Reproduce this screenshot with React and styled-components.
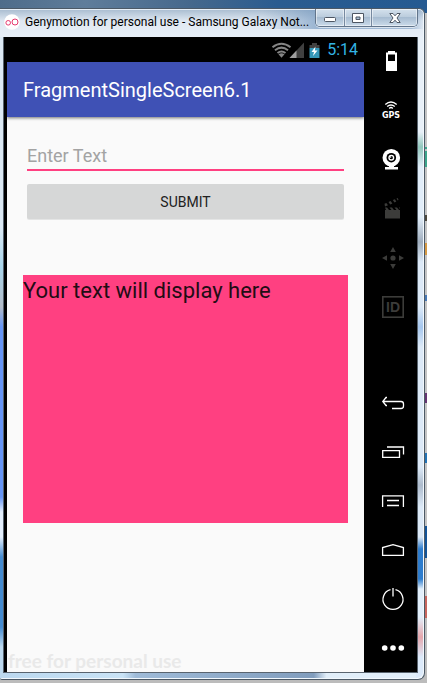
import React from "react";
import styled, { createGlobalStyle } from "styled-components";

const GlobalStyle = createGlobalStyle`
  * { box-sizing: border-box; }
  body { margin: 0; font-family: Roboto, "Liberation Sans", sans-serif; }
  button { font: inherit; border: 0; padding: 0; margin: 0; background: none; cursor: pointer; }
`;

const Desktop = styled.div`
  min-height: 100vh;
  display: flex;
  padding: 8px 2px 3px 0;
  background:
    linear-gradient(90deg, #4e6c8a, #5f7d9b 20%, #45688c 45%, #2a5c90 65%, #255a91) top / 100% 13px no-repeat,
    linear-gradient(#c4c4c4 0 134px, #3da58c 134px 136px, #c4c4c4 136px 138px, #3da58c 138px 154px,
      #c4c4c4 154px 202px, #4c473d 202px 208px, #c4c4c4 208px 230px, #d59a45 230px 242px,
      #c4c4c4 242px 282px, #4778b5 282px 288px, #c4c4c4 288px 380px, #653572 380px 390px,
      #c4c4c4 390px 440px, #2373b5 440px 450px, #c4c4c4 450px 513px, #135397 513px 545px,
      #c4c4c4 545px 583px, #c7675f 583px 605px, #bcbcbc 605px) 0 13px / 100% 100% no-repeat;
`;

const Window = styled.main`
  flex: 1;
  min-width: 0;
  display: flex;
  flex-direction: column;
  padding: 0 6px 6px 3px;
  border: solid #4c5966;
  border-width: 1px 1px 1px 0;
  border-radius: 0 6px 7px 2px;
  box-shadow: inset 0 1px #e6eff8, inset -1px -1px #f2f8fd;
  background:
    linear-gradient(#e8f0f8 0 95px, #92c8bd 110px, #e1edf9 130px 180px, #a0aebe 205px,
      #dce9f7 225px 270px, #a6c7ee 290px, #dce9f7 310px 430px, #aebccd 448px, #dce9f7 470px 500px,
      #2e7dce 512px 542px, #e2effb 552px 580px, #e5a7ad 600px, #dceafa 620px) right 28px / 8px 100% no-repeat,
    linear-gradient(#dce9f4 0 190px, #a9d5eb 230px, #b3bcc8 270px, #6695f5 290px 460px,
      #e4effc 475px 500px, #458bd0 520px 590px, #bdd9ee 610px) 0 28px / 4px 100% no-repeat,
    linear-gradient(90deg, #bbd8ef, #c9e3f6 29%, #9fbbd8 32%, #819dbd 74%, #e1eef9 77%) bottom / 100% 6px no-repeat,
    linear-gradient(90deg, transparent 62%, #7498bfaa 75%, #6d93bd88 97%, transparent) top / 100% 20px no-repeat,
    linear-gradient(#a7bbcf, #dfe8f2 12px, #e8eff7 28px) #dfeaf5;
`;

const TitleBar = styled.header`
  height: 28px;
  display: flex;
  align-items: flex-start;
`;

const AppMark = styled.svg`
  flex: none;
  width: 16px;
  height: 16px;
  margin: 5px 5px 0 1px;
`;

const WindowTitle = styled.h1`
  flex: 1;
  min-width: 0;
  margin: 0;
  font: 400 12px/26px Roboto, sans-serif;
  color: #000;
  white-space: nowrap;
`;

const WindowControls = styled.div`
  display: flex;
  flex: none;
  height: 18px;
  border: 1px solid #62758b;
  border-top: 0;
  border-radius: 0 0 5px 5px;
  overflow: hidden;
  box-shadow: 0 1px #ffffff99;
`;

const ControlButton = styled.button`
  width: ${(p) => p.$width}px;
  display: grid;
  place-items: center;
  background: linear-gradient(#d4e1ed, #bccddd 45%, #a7bcd1 50%, #cbdbea);
  box-shadow: inset 0 0 0 1px #ffffff80;
  & + & { border-left: 1px solid #7689a0; }
`;

const Emulator = styled.div`
  flex: 1;
  display: flex;
  min-width: 0;
  background: #000;
  border: solid #59646f;
  border-width: 0 1px 1px 1px;
  padding-left: 3px;
`;

const Screen = styled.section`
  flex: 1;
  min-width: 0;
  display: flex;
  flex-direction: column;
  background: #fafafa;
`;

const StatusBar = styled.div`
  height: 25px;
  display: flex;
  align-items: center;
  justify-content: flex-end;
  padding-right: 6px;
  background: #000;
  color: #33b5e5;
  font-size: 16px;
  line-height: 25px;
`;

const StatusIcons = styled.svg`
  width: 50px;
  height: 18px;
  margin-right: 6px;
`;

const AppBar = styled.header`
  height: 55px;
  padding: 0 16px;
  background: #3f51b5;
  color: #fff;
  box-shadow: 0 1px 3px #0000008c;
`;

const AppTitle = styled.h2`
  margin: 0;
  font-size: 20px;
  font-weight: 400;
  line-height: 56px;
`;

const Content = styled.div`
  flex: 1;
  display: flex;
  flex-direction: column;
  padding: 24px 16px 0;
`;

const Form = styled.form`
  display: flex;
  flex-direction: column;
  gap: 13px;
  padding: 0 4px;
`;

const TextInput = styled.input`
  width: 100%;
  height: 30px;
  padding: 0;
  border: 0;
  border-bottom: 2px solid #ff4081;
  border-radius: 0;
  outline: 0;
  background: transparent;
  color: #212121;
  font: 18px/28px Roboto, sans-serif;
  &::placeholder { color: #a3a3a3; opacity: 1; }
`;

const SubmitButton = styled.button`
  height: 35px;
  border-radius: 2px;
  background: #d6d7d7;
  box-shadow: 0 1px #e4e5e5;
  color: #212121;
  font-size: 14px;
  line-height: 36px;
`;

const Output = styled.output`
  display: block;
  height: 248px;
  margin-top: 56px;
  background: #ff4081;
  color: #220c14;
  font-size: 22px;
  line-height: 32px;
`;

const Watermark = styled.p`
  margin: auto 0 0;
  padding-left: 1px;
  color: #e9e9e9;
  font: 700 19px/22px Lato, sans-serif;
`;

const Sidebar = styled.nav`
  flex: none;
  width: 53px;
  padding-left: 5px;
  display: flex;
  flex-direction: column;
  justify-content: space-between;
`;

const ToolGroup = styled.div`
  display: flex;
  flex-direction: column;
`;

const ToolButton = styled.button`
  height: 49px;
  display: grid;
  place-items: center;
  color: ${(p) => (p.$dim ? "#3c3c3a" : "#fff")};
`;

const ToolIcon = styled.svg`
  width: 22px;
  height: 23px;
  overflow: visible;
`;

const line = { fill: "none", stroke: "currentColor", strokeWidth: 1.3 };

const sensors = [
  {
    label: "Battery",
    art: <path fill="currentColor" fillRule="evenodd" d="M6 1H13V2.5H15V21H4V2.5H6ZM6 4.5V11H13V4.5Z" />,
  },
  {
    label: "GPS",
    art: (
      <>
        <g fill="none" stroke="currentColor" strokeWidth="1.4">
          <path d="M3.3 5.6Q9 .4 14.7 5.6M5.2 7.6Q9 4.2 12.8 7.6" />
          <path d="M7.2 9.4Q9 7.8 10.8 9.4" />
        </g>
        <text x="9" y="19" textAnchor="middle" fill="currentColor" fontFamily="DejaVu Sans" fontWeight="700" fontSize="8">GPS</text>
      </>
    ),
  },
  {
    label: "Camera",
    art: (
      <>
        <circle cx="9.3" cy="9.7" r="8.8" fill="currentColor" />
        <circle cx="9.3" cy="9.7" r="4.8" fill="#000" />
        <circle cx="9.3" cy="9.7" r="3" fill="currentColor" />
        <circle cx="9.3" cy="9.7" r="1.6" fill="#000" />
        <circle cx="8.6" cy="9" r=".8" fill="currentColor" />
        <path fill="currentColor" d="M7 17H12V19H16V21.5H3V19H7Z" />
      </>
    ),
  },
  {
    label: "Record screen",
    dim: true,
    art: (
      <g fill="currentColor">
        <path d="M3 13H18V21.5H3Z" />
        <path d="M3 10.5H5L7 13H4ZM7.5 10.5H10L12 13H9.5ZM12.5 10.5H15L17 13H14.5ZM17 10.5H18V12Z" />
        <path d="M2.5 6.7L4.3 6L6 8.3L3 9.5ZM6.5 5L8.6 4L10.4 6.4L8.2 7.4ZM10.8 3.1L12.9 2.2L14.3 4.6L12.5 5.5ZM14.5 1.5L15.7 1L16.5 2.8L15.8 3.5Z" />
      </g>
    ),
  },
  {
    label: "Motion",
    dim: true,
    art: (
      <g fill="currentColor">
        <circle cx="11" cy="12" r="2.6" />
        <path d="M11 1L13.8 6H8.2ZM11 23L8.2 18H13.8ZM0 12L5 9.2V14.8ZM22 12L17 14.8V9.2Z" />
      </g>
    ),
  },
  {
    label: "Identifiers",
    dim: true,
    art: (
      <>
        <rect x=".8" y="1.8" width="20.4" height="20.4" fill="none" stroke="currentColor" strokeWidth="1.6" />
        <text x="11" y="17" textAnchor="middle" fill="currentColor" fontFamily="Liberation Sans" fontWeight="700" fontSize="14">ID</text>
      </>
    ),
  },
];

const navigation = [
  { label: "Back", art: <path {...line} d="M5 6.5H4L.8 10.5L4 14.5H5M1 10.5H19Q21.5 10.5 21.5 13V15Q21.5 17.5 19 17.5H10" /> },
  { label: "Recent apps", art: <path {...line} d="M5 7H21.5V14.5M.7 10.7H17.5V17.3H.7Z" /> },
  { label: "Menu", art: <path {...line} d="M.6 18V6.8H21.4V18M5 11.5H17M5 16.5H17" /> },
  { label: "Home", art: <path {...line} d="M.6 17.4V9.5L11 6.6L21.4 9.5V17.4Z" /> },
  { label: "Power", art: <path {...line} d="M8.5 2.7A10 10 0 1 0 13.5 2.7M11 1V9.5" /> },
  {
    label: "More",
    art: (
      <g fill="currentColor">
        <circle cx="2.7" cy="12" r="2.8" />
        <circle cx="11" cy="12" r="2.8" />
        <circle cx="19.3" cy="12" r="2.8" />
      </g>
    ),
  },
];

function Tools({ items }) {
  return (
    <ToolGroup>
      {items.map(({ label, dim, art }) => (
        <ToolButton key={label} type="button" aria-label={label} $dim={dim}>
          <ToolIcon viewBox="0 0 22 23" aria-hidden="true">{art}</ToolIcon>
        </ToolButton>
      ))}
    </ToolGroup>
  );
}

export default function App() {
  const [draft, setDraft] = React.useState("");
  const [shown, setShown] = React.useState("Your text will display here");
  const submit = (event) => {
    event.preventDefault();
    setShown(draft);
  };
  return (
    <>
      <GlobalStyle />
      <Desktop>
        <Window>
          <TitleBar>
            <AppMark viewBox="0 0 16 16" aria-hidden="true">
              <circle cx="8" cy="8" r="7.8" fill="#fff" />
              <g fill="none" stroke="#e6396f" strokeWidth="1">
                <circle cx="4.2" cy="8.8" r="2.3" />
                <circle cx="11" cy="8" r="3" />
              </g>
            </AppMark>
            <WindowTitle>Genymotion for personal use - Samsung Galaxy Not...</WindowTitle>
            <WindowControls>
              <ControlButton type="button" aria-label="Minimize" $width={28}>
                <svg width="14" height="12" aria-hidden="true"><rect x="1.5" y="5.5" width="11" height="4" rx="1" fill="#fff" stroke="#4d5663" /></svg>
              </ControlButton>
              <ControlButton type="button" aria-label="Maximize" $width={27}>
                <svg width="12" height="12" aria-hidden="true"><path d="M.5 1.5H11.5V10.5H.5ZM4 5V7.5H8V5Z" fill="#fff" fillRule="evenodd" stroke="#4d5663" /></svg>
              </ControlButton>
              <ControlButton type="button" aria-label="Close" $width={46}>
                <svg width="12" height="12" aria-hidden="true"><path d="M.8 1.5H4L6 3.8L8 1.5H11.2L8 6L11.2 10.5H8L6 8.2L4 10.5H.8L4 6Z" fill="#fff" stroke="#4d5663" /></svg>
              </ControlButton>
            </WindowControls>
          </TitleBar>
          <Emulator>
            <Screen>
              <StatusBar>
                <StatusIcons viewBox="0 0 50 18" role="img" aria-label="Wi-Fi, signal and battery charging">
                  <g fill="none" stroke="#858585" strokeWidth="2">
                    <path d="M1.5 6.2Q10.5 -.8 19.5 6.2M4 9.2Q10.5 4 17 9.2M6.5 12.1Q10.5 8.8 14.5 12.1" />
                  </g>
                  <path d="M7.5 13.3Q10.5 11 13.5 13.3L10.5 16.8Z" fill="#858585" />
                  <path d="M33 1.5V17H18.5Z" fill="#404040" />
                  <path d="M25.5 9.5V17H18.5Z" fill="#a0a0a0" />
                  <path d="M41 2H46V4H48.5V7H38.5V4H41Z" fill="#414141" />
                  <path d="M38.5 7H48.5V17H38.5Z" fill="#3597b9" />
                  <path d="M44.5 5.5L40.5 11H43L42 15L46.5 9.5H43.8Z" fill="#fff" />
                </StatusIcons>
                <time>5:14</time>
              </StatusBar>
              <AppBar><AppTitle>FragmentSingleScreen6.1</AppTitle></AppBar>
              <Content>
                <Form onSubmit={submit}>
                  <TextInput
                    aria-label="Enter Text"
                    placeholder="Enter Text"
                    value={draft}
                    onChange={(event) => setDraft(event.target.value)}
                  />
                  <SubmitButton type="submit">SUBMIT</SubmitButton>
                </Form>
                <Output>{shown}</Output>
              </Content>
              <Watermark>free for personal use</Watermark>
            </Screen>
            <Sidebar aria-label="Device controls">
              <Tools items={sensors} />
              <Tools items={navigation} />
            </Sidebar>
          </Emulator>
        </Window>
      </Desktop>
    </>
  );
}
